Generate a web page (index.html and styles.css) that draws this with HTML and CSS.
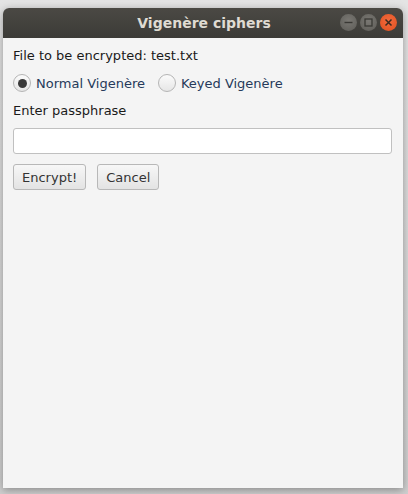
FILE: index.html
```html
<!DOCTYPE html>
<html>
<head>
<meta charset="utf-8">
<link rel="stylesheet" href="styles.css">
</head>
<body>
<div class="window">
  <div class="titlebar">
    <span class="title">Vigenère ciphers</span>
    <div class="controls">
      <span class="ctl"><svg width="17" height="17" viewBox="0 0 17 17"><line x1="4.5" y1="8.5" x2="12.5" y2="8.5" stroke="#3a3935" stroke-width="1.4"/></svg></span>
      <span class="ctl"><svg width="17" height="17" viewBox="0 0 17 17"><rect x="5" y="5" width="7" height="7" fill="none" stroke="#3a3935" stroke-width="1.3"/></svg></span>
      <span class="ctl close"><svg width="17" height="17" viewBox="0 0 17 17"><path d="M5.5 5.5 L11.5 11.5 M11.5 5.5 L5.5 11.5" stroke="#3a2a20" stroke-width="1.5"/></svg></span>
    </div>
  </div>
  <div class="content">
    <div class="label">File to be encrypted: test.txt</div>
    <div class="radios">
      <label class="radio"><span class="dot on"></span><span class="rtext">Normal Vigenère</span></label>
      <label class="radio"><span class="dot"></span><span class="rtext">Keyed Vigenère</span></label>
    </div>
    <div class="label">Enter passphrase</div>
    <div class="field"></div>
    <div class="buttons">
      <button class="btn">Encrypt!</button>
      <button class="btn">Cancel</button>
    </div>
  </div>
</div>
</body>
</html>
```
FILE: styles.css
```css
html, body {
  margin: 0;
  padding: 0;
}
body {
  width: 408px;
  height: 494px;
  overflow: hidden;
  background: linear-gradient(#e4e4e4, #cfcfcf);
  font-family: "DejaVu Sans", sans-serif;
  padding-top: 8px;
  padding-left: 3px;
  box-sizing: border-box;
}
.window {
  width: 400px;
  height: 480px;
  background: #f4f4f4;
  border-radius: 6px 6px 0 0;
  box-shadow: 0 2px 8px rgba(0,0,0,0.35);
  display: flex;
  flex-direction: column;
}
.titlebar {
  height: 30px;
  background: linear-gradient(#4b4944, #3c3b37);
  border-radius: 6px 6px 0 0;
  position: relative;
  display: flex;
  align-items: center;
  justify-content: center;
}
.title {
  color: #dfdbd2;
  font-weight: bold;
  font-size: 14px;
  font-family: "DejaVu Sans", sans-serif;
  margin-left: 2px;
}
.controls {
  position: absolute;
  right: 6px;
  top: 6px;
  display: flex;
  gap: 3px;
}
.ctl {
  width: 17px;
  height: 17px;
  border-radius: 50%;
  background: radial-gradient(circle at 50% 40%, #7a7873, #5c5b56);
  display: flex;
}
.ctl.close {
  background: radial-gradient(circle at 50% 40%, #f26a3e, #e0501e);
}
.content {
  padding: 9px 10px 0 10px;
  display: flex;
  flex-direction: column;
}
.label {
  font-size: 13px;
  color: #1a1a1a;
  height: 18px;
  line-height: 18px;
}
.radios {
  display: flex;
  gap: 13px;
  margin-top: 8px;
  height: 20px;
  align-items: center;
}
.radio {
  display: flex;
  align-items: center;
  gap: 5px;
  font-size: 13px;
  color: #263a5a;
}
.dot {
  width: 18px;
  height: 18px;
  box-sizing: border-box;
  border: 1px solid #b5b5b5;
  border-radius: 50%;
  background: linear-gradient(#fbfbfb, #e6e6e6);
  display: flex;
  align-items: center;
  justify-content: center;
}
.dot.on::after {
  content: "";
  width: 9px;
  height: 9px;
  border-radius: 50%;
  background: #3a3a3a;
}
.radios + .label {
  margin-top: 9px;
}
.field {
  margin-top: 8px;
  width: 379px;
  height: 26px;
  box-sizing: border-box;
  background: #fff;
  border: 1px solid #c0c0c0;
  border-radius: 3px;
}
.buttons {
  display: flex;
  gap: 11px;
  margin-top: 10px;
}
.btn {
  height: 26px;
  padding: 0 8px;
  font-family: "DejaVu Sans", sans-serif;
  font-size: 13px;
  color: #333;
  background: linear-gradient(#f7f7f7, #e3e3e3);
  border: 1px solid #b8b8b8;
  border-radius: 3px;
}
```
